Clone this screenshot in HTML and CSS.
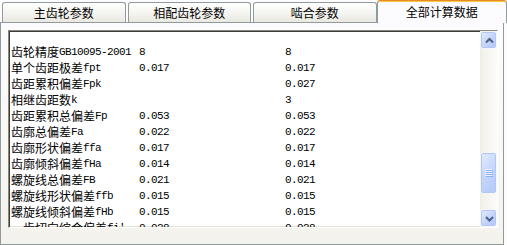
FILE: index.html
```html
<!DOCTYPE html>
<html lang="zh-CN">
<head>
    <meta charset="UTF-8">
    <title>全部计算数据</title>
    <link rel="stylesheet" href="styles.css">
</head>
<body>
    <div class="tabs">
        <div class="tab">主齿轮参数</div>
        <div class="tab">相配齿轮参数</div>
        <div class="tab">啮合参数</div>
        <div class="tab active">全部计算数据</div>
    </div>

    <div class="panel">
        <div class="listbox">
            <div class="rows">
                <div class="row"><span>齿轮精度<span class="sym">GB10095-2001</span></span><span class="num">8</span><span class="num">8</span></div>
                <div class="row"><span>单个齿距极差<span class="sym">fpt</span></span><span class="num">0.017</span><span class="num">0.017</span></div>
                <div class="row"><span>齿距累积偏差<span class="sym">Fpk</span></span><span class="num"></span><span class="num">0.027</span></div>
                <div class="row"><span>相继齿距数<span class="sym">k</span></span><span class="num"></span><span class="num">3</span></div>
                <div class="row"><span>齿距累积总偏差<span class="sym">Fp</span></span><span class="num">0.053</span><span class="num">0.053</span></div>
                <div class="row"><span>齿廓总偏差<span class="sym">Fa</span></span><span class="num">0.022</span><span class="num">0.022</span></div>
                <div class="row"><span>齿廓形状偏差<span class="sym">ffa</span></span><span class="num">0.017</span><span class="num">0.017</span></div>
                <div class="row"><span>齿廓倾斜偏差<span class="sym">fHa</span></span><span class="num">0.014</span><span class="num">0.014</span></div>
                <div class="row"><span>螺旋线总偏差<span class="sym">FB</span></span><span class="num">0.021</span><span class="num">0.021</span></div>
                <div class="row"><span>螺旋线形状偏差<span class="sym">ffb</span></span><span class="num">0.015</span><span class="num">0.015</span></div>
                <div class="row"><span>螺旋线倾斜偏差<span class="sym">fHb</span></span><span class="num">0.015</span><span class="num">0.015</span></div>
                <div class="row"><span>一齿切向综合偏差<span class="sym">fi'</span></span><span class="num">0.028</span><span class="num">0.028</span></div>
            </div>

            <div class="vscroll">
                <div class="sb-btn">
                    <svg width="15" height="15" viewBox="0 0 15 15"><polyline points="4,9.5 7.5,6 11,9.5" fill="none" stroke="#4d6185" stroke-width="2"/></svg>
                </div>
                <div class="sb-thumb">
                    <svg width="8" height="8" viewBox="0 0 8 8">
                        <rect x="0" y="0" width="7" height="1" fill="#eef3fe"/>
                        <rect x="1" y="1" width="7" height="1" fill="#8cb0f8"/>
                        <rect x="0" y="2" width="7" height="1" fill="#eef3fe"/>
                        <rect x="1" y="3" width="7" height="1" fill="#8cb0f8"/>
                        <rect x="0" y="4" width="7" height="1" fill="#eef3fe"/>
                        <rect x="1" y="5" width="7" height="1" fill="#8cb0f8"/>
                        <rect x="0" y="6" width="7" height="1" fill="#eef3fe"/>
                        <rect x="1" y="7" width="7" height="1" fill="#8cb0f8"/>
                    </svg>
                </div>
                <div class="sb-btn sb-down">
                    <svg width="15" height="15" viewBox="0 0 15 15"><polyline points="4,6 7.5,9.5 11,6" fill="none" stroke="#4d6185" stroke-width="2"/></svg>
                </div>
            </div>
        </div>
    </div>
</body>
</html>
```

FILE: styles.css
```css
* {
    margin: 0;
    padding: 0;
    box-sizing: border-box;
}

body {
    width: 507px;
    height: 245px;
    overflow: hidden;
    background: #fcfcfe;
    font-family: "Noto Sans CJK SC", sans-serif;
    font-size: 12px;
    color: #000;
}

/* tab strip */
.tabs {
    display: flex;
    align-items: flex-end;
    gap: 2px;
    height: 22px;
    padding-left: 2px;
    position: relative;
    z-index: 1;
}

.tab {
    width: 124px;
    height: 20px;
    padding-top: 1px;
    line-height: 18px;
    text-align: center;
    border: 1px solid #919b9c;
    border-bottom: none;
    border-radius: 3px 3px 0 0;
    background: linear-gradient(#ffffff, #f4f4f0 55%, #e9e8e1);
}

.tab.active {
    width: 131px;
    height: 23px;
    margin-left: -2px;
    margin-bottom: -1px;
    padding-top: 1px;
    line-height: 19px;
    border-top: 1px solid #e68b2c;
    box-shadow: inset 0 1px 0 #ffc73c;
    background: #fcfcfe;
}

/* page body */
.panel {
    width: 504px;
    height: 223px;
    padding: 7px 0 0 7px;
    border: 1px solid #919b9c;
    background: linear-gradient(#fcfcfe, #f8f8f4 60%, #f3f2ec);
}

.listbox {
    display: flex;
    width: 490px;
    height: 198px;
    background: #fff;
    border-top: 1px solid #8a887e;
    border-left: 1px solid #8a887e;
    border-right: 1px solid #fff;
    border-bottom: 1px solid #fff;
    box-shadow: inset 1px 1px 0 #3c3c3c, inset -1px -1px 0 #e3e1d6;
}

.rows {
    flex: 1;
    overflow: hidden;
    padding: 13px 0 0 2px;
}

.row {
    display: grid;
    grid-template-columns: 128px 146px 1fr;
    height: 16px;
    line-height: 16px;
    white-space: nowrap;
}

.sym,
.num {
    font-family: "Liberation Mono", monospace;
    font-size: 11px;
    letter-spacing: -0.6px;
}

.sym {
    vertical-align: 2px;
}

/* scroll bar */
.vscroll {
    display: flex;
    flex-direction: column;
    width: 17px;
    padding: 1px 0 0 1px;
    background: linear-gradient(to right, #eeede5, #f4f3ee 25%, #fbfbf8);
}

.sb-btn,
.sb-thumb {
    width: 15px;
    border: 1px solid #b4c6f3;
    border-radius: 2px;
    background: linear-gradient(135deg, #e0e9fe, #c3d4fb 55%, #b4c9f8);
    box-shadow: 0 0 0 1px #f4f6fb;
}

.sb-btn {
    height: 16px;
}

.sb-btn svg {
    display: block;
}

.sb-thumb {
    display: flex;
    align-items: center;
    justify-content: center;
    height: 40px;
    margin-top: 105px;
}

.sb-down {
    margin-top: auto;
    margin-bottom: 1px;
}
```
